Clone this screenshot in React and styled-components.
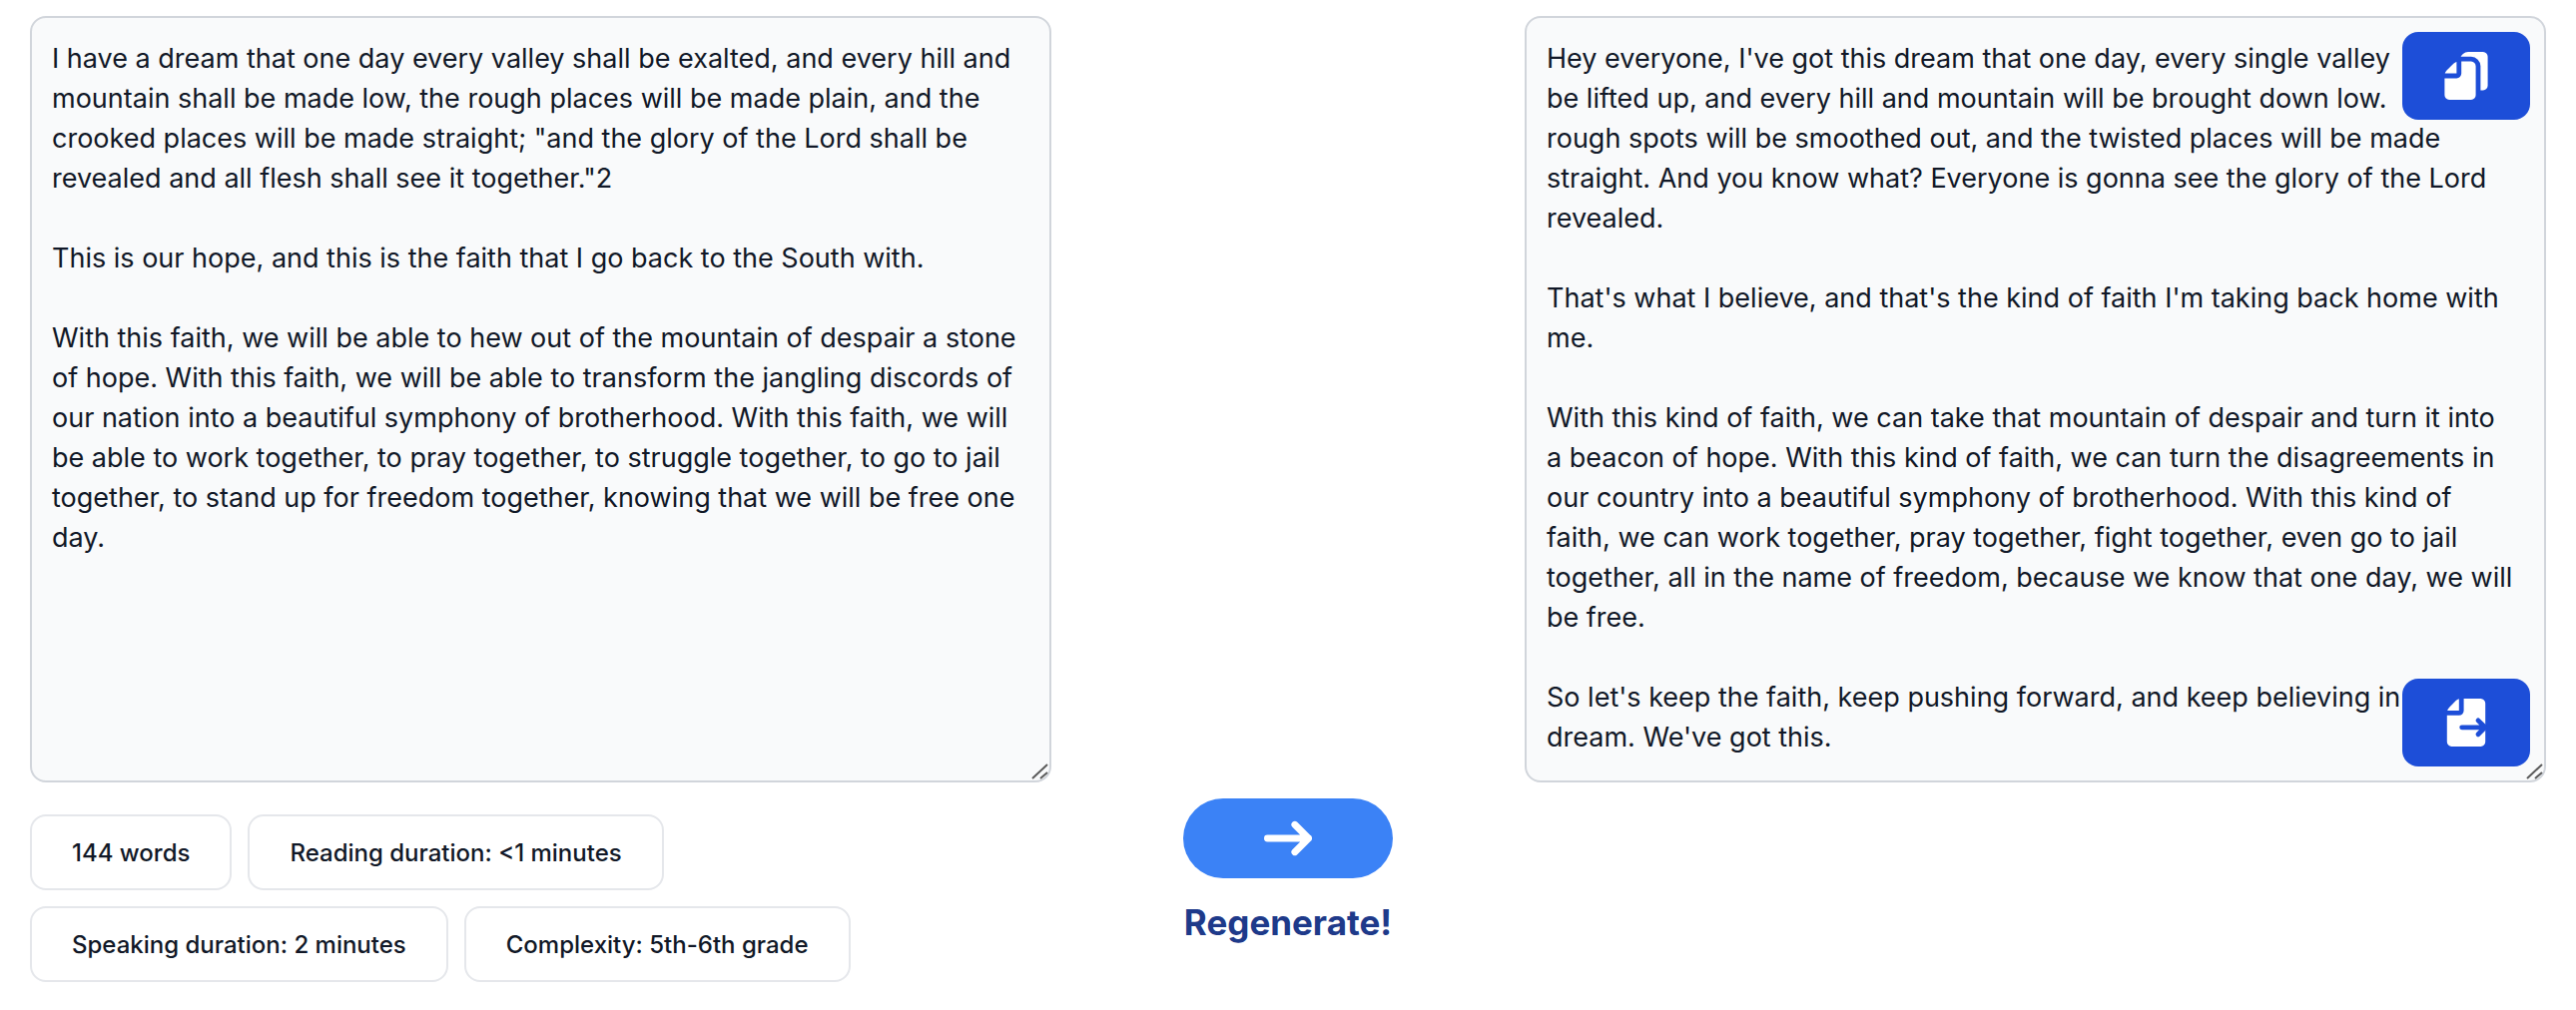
import React, { useState } from "react";
import styled, { createGlobalStyle } from "styled-components";

const GlobalStyle = createGlobalStyle`
  *, *::before, *::after {
    box-sizing: border-box;
  }
  body {
    margin: 0;
    background: #ffffff;
    color: #111827;
    font-family: Inter, "Liberation Sans", sans-serif;
  }
`;

const Page = styled.main`
  display: grid;
  grid-template-columns: minmax(0, 1fr) auto minmax(0, 1fr);
  gap: 132px;
  padding: 16px 30px 28px;
`;

const Column = styled.section`
  display: flex;
  flex-direction: column;
  gap: 32px;
`;

const Editor = styled.div`
  position: relative;
  display: flex;
`;

const TextArea = styled.textarea`
  display: block;
  width: 100%;
  margin: 0;
  padding: 21px 30px 19px 20px;
  border: 2px solid #d1d5db;
  border-radius: 16px;
  background: #f9fafb;
  color: #111827;
  font-family: inherit;
  font-size: 27px;
  line-height: 40px;
  height: 768px;
  outline: none;
  resize: vertical;
  overflow: auto;
  &::-webkit-resizer {
    background: transparent;
  }
`;

const Grip = styled.svg`
  position: absolute;
  right: 2px;
  bottom: 2px;
  width: 18px;
  height: 18px;
  pointer-events: none;
`;

const IconButton = styled.button`
  position: absolute;
  right: 16px;
  ${({ $place }) => ($place === "top" ? "top: 16px;" : "bottom: 16px;")}
  display: flex;
  padding: 20px 40px;
  border: 0;
  border-radius: 16px;
  background: #1d4ed8;
  color: #ffffff;
  cursor: pointer;
  svg {
    width: 48px;
    height: 48px;
  }
`;

const Stats = styled.ul`
  display: flex;
  flex-direction: column;
  gap: 16px;
  margin: 0;
  padding: 0;
  list-style: none;
`;

const StatRow = styled.li`
  display: flex;
  flex-wrap: wrap;
  gap: 16px;
`;

const Stat = styled.button`
  padding: 21px 40px 19px;
  border: 2px solid #e5e7eb;
  border-radius: 16px;
  background: #ffffff;
  color: #111827;
  font-family: inherit;
  font-size: 24px;
  font-weight: 500;
  line-height: 32px;
`;

const Action = styled.div`
  display: flex;
  flex-direction: column;
  align-items: center;
  justify-content: flex-end;
  gap: 24px;
  padding-bottom: 40px;
`;

const RegenerateButton = styled.button`
  display: flex;
  align-items: center;
  justify-content: center;
  width: 210px;
  height: 80px;
  border: 0;
  border-radius: 40px;
  background: #3b82f6;
  color: #ffffff;
  cursor: pointer;
  svg {
    width: 48px;
    height: 36px;
  }
`;

const ActionLabel = styled.label`
  color: #1e3a8a;
  font-size: 35px;
  font-weight: 700;
  line-height: 40px;
`;

const SOURCE = `I have a dream that one day every valley shall be exalted, and every hill and mountain shall be made low, the rough places will be made plain, and the crooked places will be made straight; "and the glory of the Lord shall be revealed and all flesh shall see it together."2

This is our hope, and this is the faith that I go back to the South with.

With this faith, we will be able to hew out of the mountain of despair a stone of hope. With this faith, we will be able to transform the jangling discords of our nation into a beautiful symphony of brotherhood. With this faith, we will be able to work together, to pray together, to struggle together, to go to jail together, to stand up for freedom together, knowing that we will be free one day.`;

const RESULT = `Hey everyone, I've got this dream that one day, every single valley  is gonna be lifted up, and every hill and mountain will be brought down low.  The rough spots will be smoothed out, and the twisted places will be made straight. And you know what? Everyone is gonna see the glory of the Lord revealed.

That's what I believe, and that's the kind of faith I'm taking back home with me.

With this kind of faith, we can take that mountain of despair and turn it into a beacon of hope. With this kind of faith, we can turn the disagreements in our country into a beautiful symphony of brotherhood. With this kind of faith, we can work together, pray together, fight together, even go to jail together, all in the name of freedom, because we know that one day, we will be free.

So let's keep the faith, keep pushing forward, and keep believing in this dream. We've got this.`;

const STATS = [
  ["144 words", "Reading duration: <1 minutes"],
  ["Speaking duration: 2 minutes", "Complexity: 5th-6th grade"],
];

const CopyIcon = () => (
  <svg viewBox="0 0 18 20" fill="currentColor" aria-hidden="true">
    <path d="M5 9V4.13a2.96 2.96 0 0 0-1.293.749L.879 7.707A2.96 2.96 0 0 0 .13 9H5Zm11.066-9H9.829a2.98 2.98 0 0 0-2.122.879L7 1.584A.987.987 0 0 0 6.766 2h4.3A3.972 3.972 0 0 1 15 6v10h1.066A1.97 1.97 0 0 0 18 14V2a1.97 1.97 0 0 0-1.934-2Z" />
    <path d="M11.066 4H7v5a2 2 0 0 1-2 2H0v7a1.969 1.969 0 0 0 1.933 2h9.133A1.97 1.97 0 0 0 13 18V6a1.97 1.97 0 0 0-1.934-2Z" />
  </svg>
);

const ExportIcon = () => (
  <svg viewBox="0 0 16 20" fill="currentColor" aria-hidden="true">
    <path d="M5 5V.13a2.96 2.96 0 0 0-1.293.749L.879 3.707A2.96 2.96 0 0 0 .13 5H5Z" />
    <path d="M14.066 0H7v5a2 2 0 0 1-2 2H0v11a1.97 1.97 0 0 0 1.934 2h12.132A1.97 1.97 0 0 0 16 18V2a1.97 1.97 0 0 0-1.934-2Z" />
    <path
      d="M6.2 12h9.6M13 9.1l2.9 2.9-2.9 2.9"
      fill="none"
      stroke="#1d4ed8"
      strokeWidth="2"
      strokeLinecap="round"
      strokeLinejoin="round"
    />
  </svg>
);

const ArrowIcon = () => (
  <svg viewBox="0 0 14 10" fill="none" aria-hidden="true">
    <path
      d="M1 5h12m0 0L9 1m4 4L9 9"
      stroke="currentColor"
      strokeWidth="2"
      strokeLinecap="round"
      strokeLinejoin="round"
    />
  </svg>
);

const ResizeGrip = () => (
  <Grip viewBox="0 0 18 18" fill="none" aria-hidden="true">
    <path d="M1 16 16 2M9 16l7-6" stroke="#5b5b5b" strokeWidth="2" />
  </Grip>
);

const App = () => {
  const [source, setSource] = useState(SOURCE);
  const [result, setResult] = useState(RESULT);

  // Copy the rewritten text to the clipboard
  const handleCopy = () => {
    navigator.clipboard?.writeText(result);
  };

  return (
    <>
      <GlobalStyle />
      <Page>
        {/* Original text */}
        <Column>
          <Editor>
            <TextArea
              aria-label="Original text"
              spellCheck={false}
              value={source}
              onChange={(e) => setSource(e.target.value)}
            />
            <ResizeGrip />
          </Editor>
          <Stats>
            {STATS.map((row) => (
              <StatRow key={row[0]}>
                {row.map((stat) => (
                  <Stat type="button" key={stat}>
                    {stat}
                  </Stat>
                ))}
              </StatRow>
            ))}
          </Stats>
        </Column>
        {/* Regenerate */}
        <Action>
          <RegenerateButton id="regenerate" type="button">
            <ArrowIcon />
          </RegenerateButton>
          <ActionLabel htmlFor="regenerate">Regenerate!</ActionLabel>
        </Action>
        {/* Rewritten text */}
        <Column>
          <Editor>
            <TextArea
              aria-label="Rewritten text"
              spellCheck={false}
              value={result}
              onChange={(e) => setResult(e.target.value)}
            />
            <ResizeGrip />
            <IconButton
              type="button"
              $place="top"
              aria-label="Copy text"
              onClick={handleCopy}
            >
              <CopyIcon />
            </IconButton>
            <IconButton
              type="button"
              $place="bottom"
              aria-label="Use as original text"
              onClick={() => setSource(result)}
            >
              <ExportIcon />
            </IconButton>
          </Editor>
        </Column>
      </Page>
    </>
  );
};

export default App;
